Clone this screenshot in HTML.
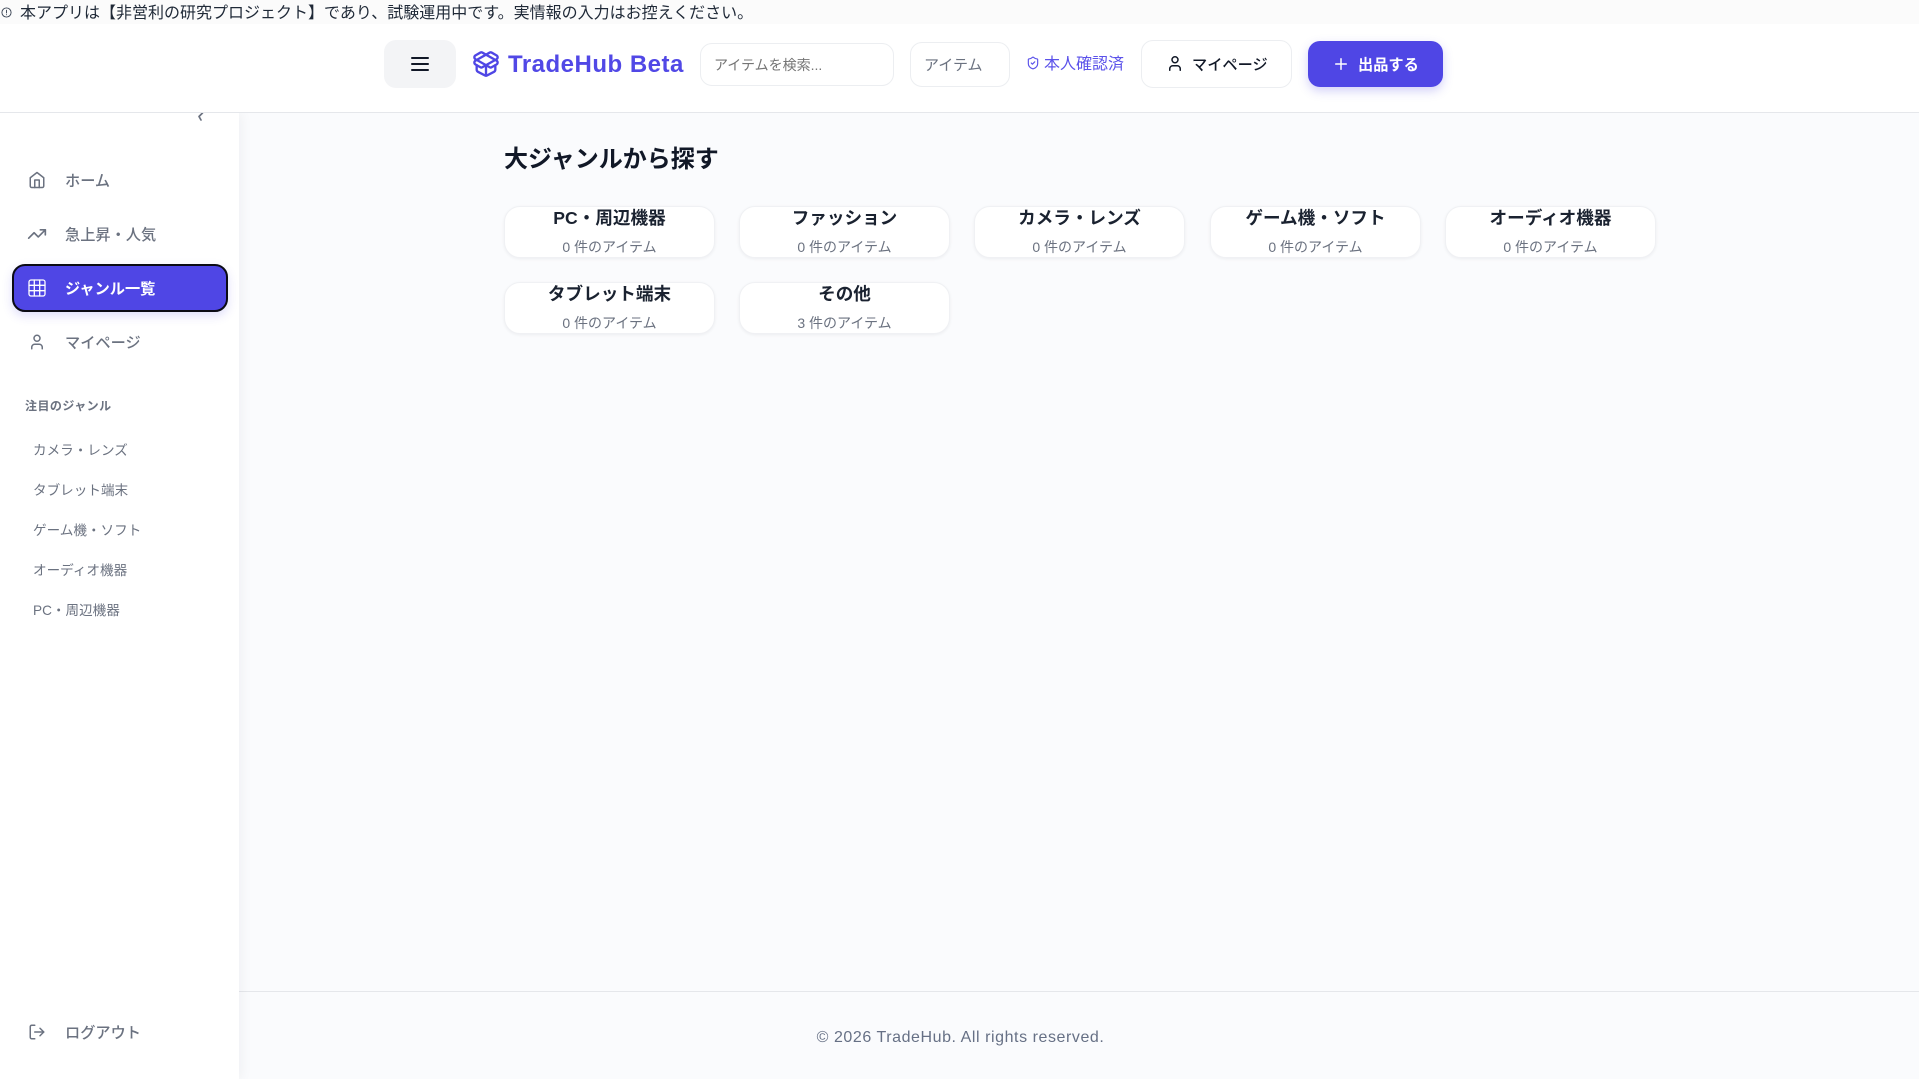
<!DOCTYPE html>
<html lang="ja">
<head>
<meta charset="utf-8">
<title>TradeHub Beta</title>
<style>
*{box-sizing:border-box;margin:0;padding:0}
html,body{width:1919px;height:1079px;overflow:hidden;background:#fafbfd}
body{position:relative;font-family:"Liberation Sans","Noto Sans CJK JP",sans-serif;color:#111827}
.a{position:absolute;white-space:nowrap}
.c{display:flex;align-items:center;justify-content:center}
svg{fill:none;stroke:currentColor;stroke-width:2;stroke-linecap:round;stroke-linejoin:round;display:block}
#banner{left:0;top:0;width:1919px;height:24px;background:#fbfbfb;font-size:16px;line-height:24px;color:#1f2937}
#header{left:0;top:24px;width:1919px;height:89px;background:#fff;border-bottom:1px solid #e5e7eb;z-index:3}
#side{left:0;top:113px;width:239px;height:966px;background:#fff;box-shadow:2px 0 12px rgba(17,24,39,.05);z-index:2;overflow:hidden}
.nav{color:#6b7280;font-size:15.2px;font-weight:500;line-height:22px;left:65px;z-index:4}
.ico{left:28px;z-index:4;color:#6b7280}
.sub{color:#6b7280;font-size:13.6px;line-height:20px;left:33px;z-index:4}
.card{width:211px;height:52px;background:#fff;border:1px solid #f0f1f4;border-radius:16px;box-shadow:0 1px 3px rgba(17,24,39,.06);text-align:center;overflow:hidden}
.card b{position:absolute;left:0;right:0;top:-1px;font-size:17.6px;line-height:24px;color:#1a2230;font-weight:700}
.card span{position:absolute;left:0;right:0;top:30px;font-size:14px;line-height:20px;color:#6b7280}
</style>
</head>
<body>
<div class="a" id="banner"></div>
<svg class="a" style="left:1px;top:7px;color:#374151;stroke-width:2" width="11" height="11" viewBox="0 0 24 24"><circle cx="12" cy="12" r="10"/><path d="M12 7v6M12 16.5v.5"/></svg>
<div class="a" style="left:20px;top:2px;font-size:16px;line-height:24px;color:#1f2937;z-index:5">本アプリは【非営利の研究プロジェクト】であり、試験運用中です。実情報の入力はお控えください。</div>

<div class="a" id="header"></div>
<div class="a c" style="left:384px;top:40px;width:72px;height:48px;background:#f3f4f6;border-radius:12px;z-index:4;color:#111827">
<svg width="24" height="24" viewBox="0 0 24 24"><path d="M4 6h16M4 12h16M4 18h16"/></svg></div>
<svg class="a" style="left:472px;top:50px;color:#4f46e5;z-index:4" width="28" height="28" viewBox="0 0 24 24"><path d="M12 22v-9"/><path d="M15.17 2.21a1.67 1.67 0 0 1 1.63 0L21 4.57a1.93 1.93 0 0 1 0 3.36L8.82 14.79a1.655 1.655 0 0 1-1.64 0L3 12.43a1.93 1.93 0 0 1 0-3.36z"/><path d="M20 13v3.87a2.06 2.06 0 0 1-1.11 1.83l-6 3.08a1.93 1.93 0 0 1-1.78 0l-6-3.08A2.06 2.06 0 0 1 4 16.87V13"/><path d="M21 12.43a1.93 1.93 0 0 0 0-3.36L8.83 2.2a1.64 1.64 0 0 0-1.63 0L3 4.57a1.93 1.93 0 0 0 0 3.36l12.18 6.86a1.636 1.636 0 0 0 1.63 0z"/></svg>
<div class="a" style="left:508px;top:49px;font-size:24px;line-height:32px;font-weight:700;color:#5148e6;z-index:4;letter-spacing:.5px">TradeHub Beta</div>
<div class="a" style="left:700px;top:43px;width:194px;height:43px;border:1px solid #eceef1;border-radius:12px;background:#fff;z-index:4;font-size:14px;line-height:43px;padding-left:13px;color:#757575">アイテムを検索...</div>
<div class="a" style="left:910px;top:42px;width:100px;height:45px;border:1px solid #eceef1;border-radius:12px;background:#fff;z-index:4;font-size:15px;line-height:45px;padding-left:13px;color:#6b7280">アイテム</div>
<svg class="a" style="left:1026px;top:55px;color:#5b52ea;z-index:4" width="14" height="16" viewBox="0 0 24 24"><path d="M20 13c0 5-3.5 7.5-7.66 8.95a1 1 0 0 1-.67-.01C7.5 20.5 4 18 4 13V6a1 1 0 0 1 1-1c2 0 4.5-1.2 6.24-2.72a1.17 1.17 0 0 1 1.52 0C14.51 3.81 17 5 19 5a1 1 0 0 1 1 1z"/><path d="m9 12 2 2 4-4"/></svg>
<div class="a" style="left:1044px;top:53px;font-size:16px;line-height:24px;color:#5b52ea;z-index:4;font-weight:400">本人確認済</div>
<div class="a" style="left:1141px;top:40px;width:151px;height:48px;border:1px solid #eceef1;border-radius:12px;background:#fff;z-index:4"></div>
<svg class="a" style="left:1166px;top:54px;color:#111827;z-index:5" width="18" height="19" viewBox="0 0 24 24"><path d="M19 21v-2a4 4 0 0 0-4-4H9a4 4 0 0 0-4 4v2"/><circle cx="12" cy="7" r="4"/></svg>
<div class="a" style="left:1192px;top:54px;font-size:15.2px;line-height:24px;font-weight:500;color:#111827;z-index:5">マイページ</div>
<div class="a" style="left:1308px;top:41px;width:135px;height:46px;background:#4f46e5;border-radius:12px;box-shadow:0 4px 10px rgba(79,70,229,.25);z-index:4"></div>
<svg class="a" style="left:1332px;top:55px;color:#fff;z-index:5" width="18" height="18" viewBox="0 0 24 24"><path d="M5 12h14M12 5v14"/></svg>
<div class="a" style="left:1358px;top:54px;font-size:15.2px;line-height:24px;font-weight:700;color:#fff;z-index:5">出品する</div>

<div class="a" id="side"></div>
<svg class="a" style="left:193px;top:110px;color:#6b7280;z-index:2" width="16" height="12" viewBox="0 0 16 12"><path d="M9.500 3L6 6.500 8 10" stroke-width="1.700"/></svg>

<svg class="a ico" style="top:171px" width="18" height="18" viewBox="0 0 24 24"><path d="m3 9 9-7 9 7v11a2 2 0 0 1-2 2H5a2 2 0 0 1-2-2z"/><path d="M9 22V12h6v10"/></svg>
<div class="a nav" style="top:171px">ホーム</div>
<svg class="a ico" style="top:224px;width:20px;left:27px" width="20" height="20" viewBox="0 0 24 24"><path d="M22 7l-8.500 8.500-5-5L2 17"/><path d="M16 7h6v6"/></svg>
<div class="a nav" style="top:225px">急上昇・人気</div>
<div class="a" style="left:12px;top:264px;width:216px;height:48px;background:#4f46e5;border:2px solid #0b0b14;border-radius:13px;box-shadow:0 4px 10px rgba(79,70,229,.18);z-index:4"></div>
<svg class="a ico" style="top:279px;color:#fff;z-index:5;stroke-width:1.300" width="18" height="18" viewBox="0 0 18 18"><rect x="1" y="1" width="16" height="16" rx="2"/><path d="M1 6.300h16M1 11.700h16M6.300 1v16M11.700 1v16"/></svg>
<div class="a nav" style="top:279px;color:#fff;font-weight:700;z-index:5">ジャンル一覧</div>
<svg class="a ico" style="top:333px" width="18" height="18" viewBox="0 0 24 24"><path d="M19 21v-2a4 4 0 0 0-4-4H9a4 4 0 0 0-4 4v2"/><circle cx="12" cy="7" r="4"/></svg>
<div class="a nav" style="top:333px">マイページ</div>

<div class="a" style="left:25px;top:397px;font-size:12px;line-height:18px;font-weight:700;color:#6b7280;letter-spacing:.45px;z-index:4">注目のジャンル</div>
<div class="a sub" style="top:441px">カメラ・レンズ</div>
<div class="a sub" style="top:481px">タブレット端末</div>
<div class="a sub" style="top:521px">ゲーム機・ソフト</div>
<div class="a sub" style="top:561px">オーディオ機器</div>
<div class="a sub" style="top:601px">PC・周辺機器</div>

<svg class="a ico" style="top:1023px" width="18" height="18" viewBox="0 0 24 24"><path d="M9 21H5a2 2 0 0 1-2-2V5a2 2 0 0 1 2-2h4"/><path d="M16 17l5-5-5-5"/><path d="M21 12H9"/></svg>
<div class="a nav" style="top:1023px">ログアウト</div>

<div class="a" style="left:504px;top:144px;font-size:24px;line-height:32px;font-weight:700;color:#111827">大ジャンルから探す</div>

<div class="a card" style="left:504px;top:206px"><b>PC・周辺機器</b><span>0 件のアイテム</span></div>
<div class="a card" style="left:739px;top:206px"><b>ファッション</b><span>0 件のアイテム</span></div>
<div class="a card" style="left:974px;top:206px"><b>カメラ・レンズ</b><span>0 件のアイテム</span></div>
<div class="a card" style="left:1210px;top:206px"><b>ゲーム機・ソフト</b><span>0 件のアイテム</span></div>
<div class="a card" style="left:1445px;top:206px"><b>オーディオ機器</b><span>0 件のアイテム</span></div>
<div class="a card" style="left:504px;top:282px"><b>タブレット端末</b><span>0 件のアイテム</span></div>
<div class="a card" style="left:739px;top:282px"><b>その他</b><span>3 件のアイテム</span></div>

<div class="a" style="left:239px;top:991px;width:1680px;height:1px;background:#e5e7eb"></div>
<div class="a" style="left:1px;top:1026px;width:1919px;text-align:center;font-size:16px;line-height:24px;color:#667085;letter-spacing:.56px;z-index:1">© 2026 TradeHub. All rights reserved.</div>
</body>
</html>
